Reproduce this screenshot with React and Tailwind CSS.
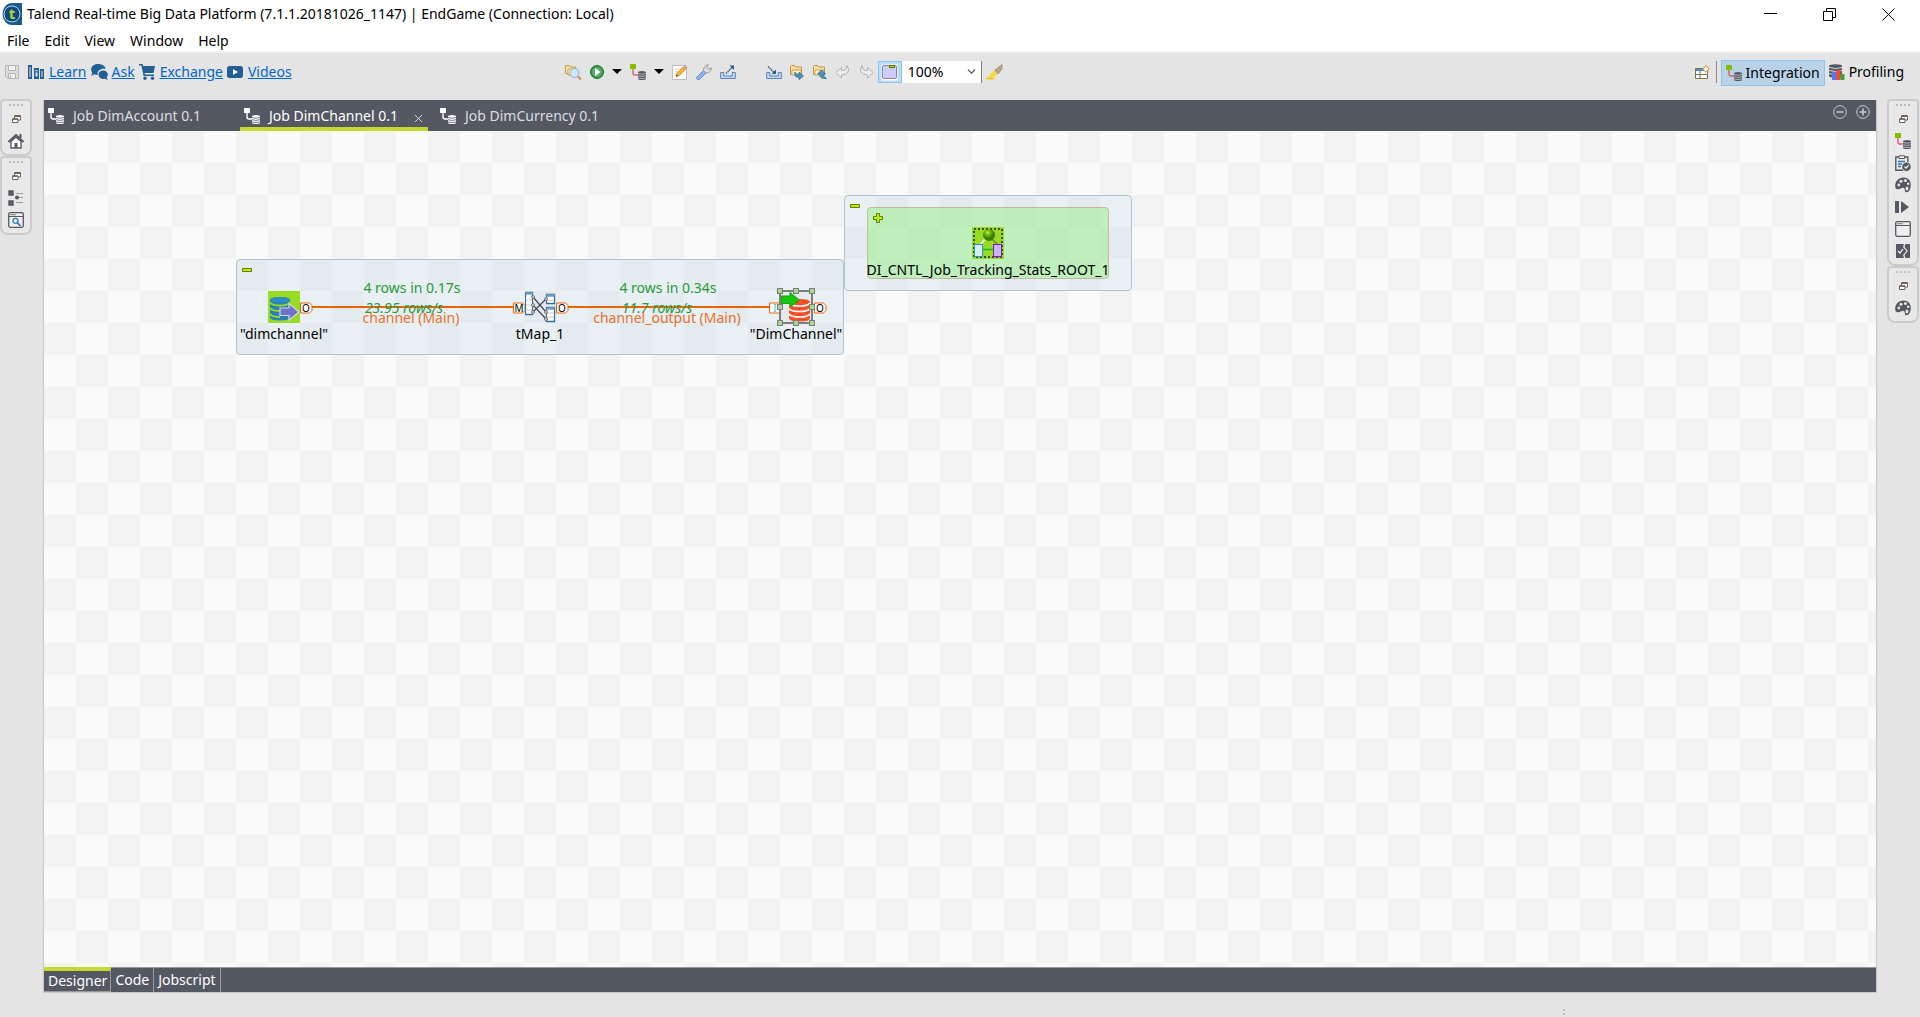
import React from 'react';
import { ChevronDown } from 'lucide-react';

const svg = (w, h = w) => ({ width: w, height: h, viewBox: `0 0 ${w} ${h}`, 'aria-hidden': true });

const TalendLogo = () => (
  <svg {...svg(20, 24)}>
    <path d="M11 1h9v22H10z" fill="#1b5a8e" />
    <ellipse cx="10" cy="12" rx="9.5" ry="11" fill="#1b5a8e" />
    <circle cx="10" cy="12" r="8" fill="#0f4a7c" stroke="#b9d3e6" strokeWidth="1" />
    <text x="10" y="17" textAnchor="middle" fontSize="15" fontWeight="700" fontFamily="Noto Sans, sans-serif" fill="#b5d334">t</text>
  </svg>
);

const JobIcon = ({ head = '#84bd00', line = '#e0606a', db = '#545863' }) => (
  <svg {...svg(16)}>
    <rect x="0" y="0" width="6" height="5" rx="0.5" fill={head} />
    <path d="M3 5v4q0 2 2 2h3" fill="none" stroke={line} strokeWidth="1.4" />
    <path d="M8 8.5q0-1.500 4-1.500t4 1.500v6q0 1.500-4 1.500t-4-1.500z" fill={db} />
    <path d="M8 9.500q4 1.500 8 0M8 11.700q4 1.500 8 0M8 13.900q4 1.500 8 0" fill="none" stroke={head === '#fff' ? '#545863' : '#c9cbd0'} strokeWidth="0.8" />
  </svg>
);
const WhiteJob = () => <JobIcon head="#fff" line="#fff" db="#fff" />;

const Save = () => (
  <svg {...svg(16)} fill="none" stroke="#b4b4b4">
    <path d="M1.500 1.500h13v13h-11l-2-2z" fill="#dcdcdc" />
    <path d="M4.500 1.500h7v5h-7zM4.500 14v-4.500h7v4.500M6.500 11v3" fill="#efefef" />
  </svg>
);
const Learn = () => (
  <svg {...svg(17, 16)} fill="#245f94">
    <path d="M0 1h4v14H0zM6 4h5v11H6zM12 5h4v10h-4z" />
    <path d="M1.500 3h1v10h-1zM7.500 6h2v1.200h-2zM7.500 8.500h2v4h-2zM13.500 7h1v6h-1z" fill="#e4e4e4" />
  </svg>
);
const Ask = () => (
  <svg {...svg(17, 16)} fill="#245f94">
    <path d="M7 0c5 0 7.500 2.500 7.500 5-5-1-8.500 2-8 6-1.500 0-2-.2-3-.7L0 12l1.300-3C-1.500 5 1 0 7 0z" />
    <path d="M12 6.500c3 0 4.800 1.700 4.800 4 0 1.200-.4 2-1.100 2.800l1.100 2.700-3-1.200c-3.500.7-6.300-1.300-6.300-4.100 0-2.500 1.900-4.200 4.500-4.200z" />
  </svg>
);
const Cart = () => (
  <svg {...svg(17, 16)} fill="#245f94">
    <path d="M0 0h3.500l.8 2H16l-1.500 7H5.600l.4 1.500h9V12H4.600L2.400 1.600H0z" />
    <circle cx="6" cy="14.200" r="1.700" /><circle cx="13.500" cy="14.200" r="1.700" />
  </svg>
);
const Video = () => (
  <svg {...svg(17, 16)}><rect x="0" y="2" width="16" height="12" rx="2.500" fill="#245f94" /><path d="M6 5l5 3-5 3z" fill="#fff" /></svg>
);
const SearchFolder = () => (
  <svg {...svg(17, 16)}>
    <path d="M.5 9.500v-8h4l1 1.500h5v6.500z" fill="#fbe3a4" stroke="#c99b4b" />
    <path d="M3 5h9v6H3z" fill="#fff1c9" stroke="#c99b4b" />
    <circle cx="9.500" cy="9" r="4.500" fill="#cfe5fb" stroke="#8bb0dc" />
    <path d="M13 12.500l3 3" stroke="#d08a54" strokeWidth="2" />
  </svg>
);
const Run = () => (
  <svg {...svg(14)}><circle cx="7" cy="7" r="6.500" fill="#35934a" stroke="#1f7436" /><circle cx="7" cy="7" r="4.800" fill="#5fb06e" /><path d="M5 3l5.500 4L5 11z" fill="#fff" /></svg>
);
const Caret = () => <svg {...svg(10, 6)}><path d="M0 0h10L5 5z" fill="#000" /></svg>;
const EditIcon = () => (
  <svg {...svg(16)}>
    <path d="M.5 1.500h14v14H.5z" fill="#fff" stroke="#bdbdbd" />
    <path d="M3 5h5M3 7.500h3M3 10h2" stroke="#d8d8d8" />
    <path d="M4 12.500l1-3.500 6-6 2.500 2.300-6.200 6.200z" fill="#f7b733" stroke="#d4872a" strokeWidth=".8" />
    <path d="M11 3l1.500-1.600 2.600 2.300-1.600 1.600z" fill="#e98b7c" />
    <path d="M4 12.500l.5-2 1.500 1.300z" fill="#333" />
  </svg>
);
const Wrench = () => (
  <svg {...svg(16)}>
    <path d="M1 13L7.500 6.500l2.500 2.500-6.500 6.500q-1.500.5-2.500-.5t0-2z" fill="#8fb4ee" stroke="#5f8bd0" />
    <path d="M7.500 6.500Q7.500 1.500 12.500.7L10.700 3.500l1.800 1.800L15.500 4Q15 8.800 10 9z" fill="#dcdcdc" stroke="#9a9a9a" />
  </svg>
);
const Export = () => (
  <svg {...svg(16)} fill="none"><path d="M.7 8.500h3v3.500h8.600v-3.500h3v6H.7z" fill="#c7d9f0" stroke="#5b82b8" /><path d="M6 9.500L13 2.500" stroke="#235a8c" strokeDasharray="1.500 .7" strokeWidth="1.400" /><path d="M9.500 1.500H14V6z" fill="#235a8c" /></svg>
);
const Import = () => (
  <svg {...svg(16)} fill="none"><path d="M.7 8.500h3v3.500h8.600v-3.500h3v6H.7z" fill="#c7d9f0" stroke="#5b82b8" /><path d="M2 2.500l6 6" stroke="#235a8c" strokeDasharray="1.500 .7" strokeWidth="1.400" /><path d="M10 5.500V10H5.500z" fill="#235a8c" /></svg>
);
const FolderArrow = ({ up }) => (
  <svg {...svg(16)}>
    <path d="M1.500 10.500v-8l1-1h3l1 1.500h6v7.500z" fill="#fbe3a4" stroke="#c1903f" />
    <path d="M3 6h9v5H3z" fill="#fff1c9" stroke="#c1903f" strokeWidth=".8" />
    {up
      ? <path d="M9.500 6l4 4h-2q0 3 3 4.500-7 .5-7-4.500h-2z" fill="#4d93b8" stroke="#2b6c94" strokeWidth=".8" />
      : <path d="M6 8q0 2.500 4 2.500V8.200L14.500 12 10 15.500v-2.300Q4.500 13.500 6 8z" fill="#4d93b8" stroke="#2b6c94" strokeWidth=".8" />}
  </svg>
);
const Undo = () => <svg {...svg(16)}><path d="M.8 8.500L6.500 3.500v3Q12 7 12 1.500q5 8-5.500 9.500v3z" fill="#ececec" stroke="#b2b2b2" /></svg>;
const Redo = () => <svg {...svg(16)}><path d="M15.200 8.500L9.500 3.500v3Q4 7 4 1.500q-5 8 5.500 9.500v3z" fill="#ececec" stroke="#b2b2b2" /></svg>;
const SubjobIcon = () => (
  <svg {...svg(17)}><rect x=".5" y=".5" width="16" height="16" fill="#fff" /><rect x="1.500" y="1.500" width="14" height="13" rx="1.500" fill="#ccccff" stroke="#8a8a96" /><rect x="8.500" y="1.500" width="5" height="2" fill="#b5e000" stroke="#5c7a00" /></svg>
);
const Brush = () => (
  <svg {...svg(17, 16)}><path d="M4 10l5.500-4.500 2.500 3-3 4.500-7 1z" fill="#f6d848" /><path d="M9 6L16 .5V5l-4 5z" fill="#b8a98c" stroke="#8c7f68" strokeWidth=".7" /><path d="M0 14.500h8" stroke="#f2c500" strokeWidth="1.600" /></svg>
);
const Perspective = () => (
  <svg {...svg(15)} fill="none"><path d="M.5 3.500h12v10H.5z" fill="#f4faff" stroke="#827349" /><path d="M1 5h9" stroke="#4d8dc8" strokeWidth="2" /><path d="M5 6v8M1 9.500h11" stroke="#827349" /><path d="M11 .7L14.300 4 11 7.300 7.700 4z" fill="#fff4cf" stroke="#bd8f34" /></svg>
);
const Profile = () => (
  <svg {...svg(16)}><path d="M0 2q0-1.800 6.500-1.800T13 2v10q0 1.500-6.500 1.500T0 12z" fill="#545863" /><path d="M0 3.500q6.500 2 13 0M0 6.500q6.500 2 13 0M0 9.500q3 1 5 1" fill="none" stroke="#d9dade" /><path d="M3 8h4v8H3z" fill="#4d7df0" /><path d="M7 6h4.500v10H7z" fill="#f4473c" /><path d="M11.500 10h4v6h-4z" fill="#35a835" /></svg>
);
const Restore = () => (
  <svg {...svg(9, 8)} fill="#fff" stroke="#6f6257"><path d="M2.500 1h6v4h-6z" /><path d="M2.500 1h6" strokeWidth="2" /><path d="M.5 4h5.500v3.500H.5z" /><path d="M.5 4H6" strokeWidth="1.500" /></svg>
);
const Home = () => (
  <svg {...svg(16)}><path d="M3 8.500V15h10V8.500L8 4z" fill="#fff" stroke="#545863" strokeWidth="1.400" /><path d="M.5 9L8 2l7.500 7" fill="none" stroke="#545863" strokeWidth="2" /><path d="M11.500 1h2v4h-2zM6.500 10h3v5h-3z" fill="#545863" /></svg>
);
const Outline = () => (
  <svg {...svg(16)}><path d="M1.500 1.500h3v3h-3zM1.500 11.500h3v3h-3z" fill="#fff" stroke="#545863" strokeWidth="2.400" /><path d="M8 3.500h7M11 7.500h4M8 12.500h7" stroke="#9b9da3" /><circle cx="9" cy="7.500" r="2" fill="#545863" /></svg>
);
const WindowIcon = ({ search }) => (
  <svg {...svg(16)} fill="none">
    <rect x=".7" y=".7" width="14.600" height="14.600" rx="1.500" fill="#ededed" stroke="#545863" strokeWidth="1.300" />
    <path d="M1 4.500h14" stroke="#545863" /><path d="M2.500 2.600h5" stroke="#545863" strokeDasharray="1.200 .8" strokeWidth="1.200" />
    {search && <><circle cx="7.500" cy="8.800" r="2.500" stroke="#2d7cb8" strokeWidth="1.300" /><path d="M9.500 10.800l3 3" stroke="#2d7cb8" strokeWidth="1.700" /></>}
  </svg>
);
const Clipboard = () => (
  <svg {...svg(16)} fill="none"><path d="M8 15.300H.8V2h12v5" stroke="#545863" strokeWidth="1.400" /><path d="M4 .8h5.500v2.700H4z" fill="#fff" stroke="#545863" /><path d="M3 6.500h7M3 9h4M3 11.500h3" stroke="#2d7cb8" strokeWidth="1.300" /><circle cx="11.500" cy="11.700" r="4.300" fill="#545863" /><path d="M9.500 11.700l1.500 1.500 2.700-3" stroke="#fff" strokeWidth="1.200" /></svg>
);
const Palette = () => (
  <svg {...svg(16)}><path d="M8.500.5c4.500 0 7.300 3 7.300 7.300 0 4.500-1.800 7.500-4.300 7.500-2.200 0-1.200-2-2-3.500-1-2-3-.3-5 .2C1.500 13 .2 11.700.2 9 .2 4 3.800.5 8.500.5z" fill="#545863" /><g fill="#e4e4e4"><circle cx="3.800" cy="8" r="1.400" /><circle cx="6" cy="4.300" r="1.500" /><circle cx="10.400" cy="3.600" r="1.500" /><circle cx="13.200" cy="6.800" r="1.300" /><ellipse cx="12" cy="11.500" rx="1.400" ry="2" /></g></svg>
);
const RunView = () => <svg {...svg(16, 12)} fill="#545863"><path d="M0 0h4v12H0zM6 0l8 6-8 6z" /></svg>;
const TestView = () => (
  <svg {...svg(16)}><path d="M1 1h8l-1 3 3.500 4L8 12l1 3H1z" fill="#545863" /><path d="M10.500 1H15v14h-4.500l-1-3L13 8 9.500 4z" fill="#545863" /><path d="M3 8l2 2 3-4" fill="none" stroke="#fff" strokeWidth="1.200" /></svg>
);

const InputDb = () => (
  <svg {...svg(32)}>
    <rect width="32" height="32" fill="#98db22" />
    <path d="M2 9q0-3 10-3t10 3v17q0 3.500-10 3.500T2 26z" fill="#2781b6" />
    <ellipse cx="12" cy="9" rx="10" ry="2.800" fill="#2f8cc2" />
    <path d="M2 11.500q2 3 10 3t10-3M2 17q2 3 10 3M2 23q2 3 10 3" fill="none" stroke="#98db22" strokeWidth="2" />
    <path d="M12 17h9v-4.500l10 8.500-10 8v-4.500h-9z" fill="#6b75c4" stroke="#d9d4ee" strokeWidth="1.200" />
  </svg>
);
const MapIcon = () => (
  <svg {...svg(32, 36)} fill="#fff" stroke="#3d6f9c">
    <path d="M.5 2.500h7v22h-7zM21.500 4.500h8v9h-8zM21.500 17.500h8v14h-8z" strokeWidth="1.300" />
    <path d="M.5 3.500h7M21.500 5.500h8M21.500 18.500h8" stroke="#6f9cc6" strokeWidth="2.500" />
    <path d="M1.500 10h5M1.500 15h5M1.500 20h5M22.500 10.500h6M22.500 23h6M22.500 27h6" stroke="#c6c9ce" />
    <path d="M8 7l13 15M8 15l13 14M8 22L21 9" fill="none" stroke="#454850" strokeWidth="1.200" />
    <g fill="#ccc" stroke="#666" strokeWidth=".8"><circle cx="8" cy="7" r="1.500" /><circle cx="8" cy="15" r="1.500" /><circle cx="8" cy="22" r="1.500" /><circle cx="21" cy="9" r="1.500" /><circle cx="21" cy="22" r="1.500" /><circle cx="21" cy="29" r="1.500" /></g>
  </svg>
);
const OutputDb = () => (
  <svg {...svg(38)}>
    <path d="M12 14q0-3 10.500-3T33 14v16q0 3.500-10.500 3.500T12 30z" fill="#fb4f2a" />
    <path d="M12 15q2 3 10.500 3T33 15M12 20.500q2 3 10.500 3t10.500-3M12 26q2 3 10.500 3T33 26" fill="none" stroke="#fff" strokeWidth="1.500" />
    <path d="M4 8h9V4.500l9.500 7.500-9.500 7v-3.500H4z" fill="#16c60c" stroke="#11a50a" />
    <path d="M3 3h32v32H3z" fill="none" stroke="#7d7d7d" strokeWidth="2" />
    <g fill="#a8d890" stroke="#7d7d7d">
      {[.5, 16.5, 32.5].flatMap((x) => [.5, 16.5, 32.5].filter((y) => x !== 16.5 || y !== 16.5).map((y) => <rect key={`${x}-${y}`} x={x} y={y} width="5" height="5" />))}
    </g>
  </svg>
);
const JobletIcon = () => (
  <svg {...svg(32)}>
    <defs><radialGradient id="ball" cx=".4" cy=".3"><stop offset="0" stopColor="#b6f04a" /><stop offset=".6" stopColor="#55a800" /><stop offset="1" stopColor="#3c7d00" /></radialGradient></defs>
    <rect width="32" height="32" fill="#98db22" />
    <rect x="2" y="2" width="28" height="28" fill="none" stroke="#3c4a1c" strokeWidth="2" strokeDasharray="2 2" />
    <path d="M14 11l-6 7" stroke="#e8f4d0" strokeWidth="2" /><path d="M19 11l7 7" stroke="#6b8a3a" strokeWidth="1.500" />
    <path d="M11 22.500h10" stroke="#00c818" strokeWidth="1.500" />
    <circle cx="17" cy="8" r="6" fill="url(#ball)" />
    <rect x="2.500" y="17.500" width="8" height="12" fill="#d9ecf8" stroke="#1f95d8" />
    <rect x="21.500" y="17.500" width="8" height="12" fill="#c5b8f2" stroke="#8a13d8" />
  </svg>
);
const Minus = () => <svg {...svg(10, 4)}><path d="M.5.5h9v3h-9z" fill="#b9f000" stroke="#667c00" /></svg>;
const Plus = () => <svg {...svg(10)}><path d="M3.500.5h3v3h3v3h-3v3h-3v-3h-3v-3h3z" fill="#b9f000" stroke="#667c00" /></svg>;

const Port = ({ name, square }) => (
  <svg {...svg(13, 12)}>
    <path d={square ? 'M.5 1h10v10H.5z' : 'M.5 1h9l2.500 2.500v5L9.500 11H.5z'} fill="#fff" stroke="#e96400" />
    <text x="6" y="10" textAnchor="middle" fontSize="10" fontFamily="Noto Sans, sans-serif" fill={square ? '#5aaee8' : '#000'}>{name}</text>
  </svg>
);

const IconButton = ({ label, className = '', children }) => (
  <button type="button" aria-label={label} className={`flex shrink-0 items-center justify-center ${className}`}>{children}</button>
);

const HelpLink = ({ icon, children }) => (
  <a href="#" className="flex items-center gap-1 text-[#0066cc]">{icon}<span className="underline">{children}</span></a>
);

const Rail = ({ label, items }) => (
  <div role="toolbar" aria-label={label} className="flex w-8 flex-col items-center rounded-b-lg rounded-t-sm border-2 border-[#cbcbcb] bg-[#e8e8e8] pt-[3px] pb-0.5">
    <div className="mb-0.5 flex gap-0.5">
      {[0, 1, 2, 3].map((i) => <span key={i} className="size-0.5 bg-[#bdbdbd]" />)}
    </div>
    {[['Restore', <Restore />], ...items].map(([name, icon]) => (
      <IconButton key={name} label={name} className="h-[22px] w-6">{icon}</IconButton>
    ))}
  </div>
);

const Tab = ({ title, active }) => (
  <div className={`flex w-[188px] items-center border-b-4 px-1 pt-1 ${active ? 'border-[#c4d82e] text-white' : 'border-transparent text-[#dcdde0]'}`}>
    <button type="button" role="tab" aria-selected={!!active} className="flex h-full items-center gap-[9px] whitespace-nowrap"><WhiteJob />{title}</button>
    {active && (
      <IconButton label="Close tab" className="mt-1.5 ml-auto w-3">
        <svg {...svg(9)}><path d="M1 1l7 7M8 1L1 8" stroke="#d4d5d8" /></svg>
      </IconButton>
    )}
  </div>
);

const Label = ({ at, className = 'text-black', children }) => (
  <div className={`absolute -translate-x-1/2 whitespace-nowrap ${at} ${className}`}>{children}</div>
);

export default function App() {
  return (
    <div className="flex h-screen flex-col bg-[#e4e4e4] font-['Noto_Sans',sans-serif] text-sm leading-5 text-black">
      <header className="border-b-2 border-[#f2f2f2] bg-white">
        <div className="flex h-7 items-center pl-0.5">
          <TalendLogo />
          <h1 className="ml-[5px]">Talend Real-time Big Data Platform (7.1.1.20181026_1147) | EndGame (Connection: Local)</h1>
          <div className="ml-auto flex gap-[46px] pr-[25px]">
            <IconButton label="Minimize"><svg {...svg(13)}><path d="M0 5.500h13" stroke="#000" /></svg></IconButton>
            <IconButton label="Restore window"><svg {...svg(13)} fill="none" stroke="#000"><path d="M.5 3.500h9v9h-9zM3.500 3V.5h9v9H10" /></svg></IconButton>
            <IconButton label="Close"><svg {...svg(13)}><path d="M.5.5l12 12M12.500.5l-12 12" stroke="#000" /></svg></IconButton>
          </div>
        </div>
        <nav className="flex h-[23px] items-start gap-[15px] pt-[3px] pl-[7px]">
          {['File', 'Edit', 'View', 'Window', 'Help'].map((m) => <button key={m} type="button">{m}</button>)}
        </nav>
      </header>

      <div className="flex h-[46px] shrink-0 items-center pb-2 pl-1 whitespace-nowrap">
        <div className="flex items-center gap-1">
          <IconButton label="Save" className="mr-1"><Save /></IconButton>
          <HelpLink icon={<Learn />}>Learn</HelpLink>
          <HelpLink icon={<Ask />}>Ask</HelpLink>
          <HelpLink icon={<Cart />}>Exchange</HelpLink>
          <HelpLink icon={<Video />}>Videos</HelpLink>
        </div>
        <div className="ml-[273px] flex items-center gap-2">
          <IconButton label="Find"><SearchFolder /></IconButton>
          <IconButton label="Run"><Run /></IconButton>
          <IconButton label="Run options"><Caret /></IconButton>
          <IconButton label="Create job"><JobIcon /></IconButton>
          <IconButton label="Create options"><Caret /></IconButton>
          <IconButton label="Edit"><EditIcon /></IconButton>
          <IconButton label="Settings"><Wrench /></IconButton>
          <IconButton label="Export"><Export /></IconButton>
        </div>
        <div className="ml-[30px] flex items-center gap-[7px]">
          <IconButton label="Import"><Import /></IconButton>
          <IconButton label="Import items"><FolderArrow /></IconButton>
          <IconButton label="Export items"><FolderArrow up /></IconButton>
          <IconButton label="Undo"><Undo /></IconButton>
          <IconButton label="Redo"><Redo /></IconButton>
        </div>
        <div className="ml-1 flex items-center">
          <IconButton label="Show subjobs" className="h-[22px] w-6 border border-[#8cc3f0] bg-[#bcdcf4]"><SubjobIcon /></IconButton>
          <div className="relative">
            <select aria-label="Zoom" defaultValue="100%" className="block h-[22px] w-20 appearance-none border-r border-[#7a7a7a] bg-white pl-1.5 leading-5">
              <option>100%</option>
            </select>
            <ChevronDown size={13} strokeWidth={2} className="pointer-events-none absolute top-1 right-1 text-[#444]" />
          </div>
          <IconButton label="Clean" className="ml-1"><Brush /></IconButton>
        </div>
        <div className="ml-auto flex items-center pr-4">
          <IconButton label="Open perspective"><Perspective /></IconButton>
          <span className="mr-1 ml-1.5 h-[22px] w-px bg-[#8a8a8a]" />
          <button type="button" aria-pressed="true" className="mt-0.5 flex h-[26px] items-center gap-1 border border-[#8cc3f0] bg-[#b8d3e8] px-1"><JobIcon />Integration</button>
          <button type="button" className="ml-[3px] flex items-center gap-1 pl-px"><Profile />Profiling</button>
        </div>
      </div>

      <div className="flex min-h-0 flex-1">
        <aside className="w-[43px] shrink-0">
          <Rail label="Left views" items={[['Home', <Home />]]} />
          <Rail label="Outline views" items={[['Outline', <Outline />], ['Code viewer', <WindowIcon search />]]} />
        </aside>

        <main className="mt-px flex min-w-0 flex-1 flex-col border border-t-0 border-[#c8c8c8]">
          <div role="tablist" className="flex h-[31px] shrink-0 gap-2 bg-[#545863]">
            <Tab title="Job DimAccount 0.1" />
            <Tab title="Job DimChannel 0.1" active />
            <Tab title="Job DimCurrency 0.1" />
            <div className="mt-1 ml-auto flex h-4 gap-[9px] pr-1.5">
              <IconButton label="Minimize editor"><svg {...svg(14)} fill="none" stroke="#c9cbd0"><circle cx="7" cy="7" r="6.300" /><path d="M3.500 7h7" strokeWidth="1.500" /></svg></IconButton>
              <IconButton label="Maximize editor"><svg {...svg(14)} fill="none" stroke="#c9cbd0"><circle cx="7" cy="7" r="6.300" /><path d="M3.500 7h7M7 3.500v7" strokeWidth="1.500" /></svg></IconButton>
            </div>
          </div>

          <div className="relative min-h-0 flex-1 overflow-hidden bg-[conic-gradient(#fafafa_25%,#f3f3f3_0_50%,#fafafa_0_75%,#f3f3f3_0)] bg-[length:64px_64px]">
            <section aria-label="dimchannel subjob" className="absolute top-[128px] left-[192px] h-24 w-[608px] rounded border border-[#afc5cf] bg-[rgba(193,220,233,0.3)]" />
            <div className="absolute top-[137px] left-[198px]"><Minus /></div>

            <div className="absolute top-[175px] left-[267px] h-0.5 w-[204px] bg-[#e96400]" />
            <div className="absolute top-[175px] left-[523px] h-0.5 w-[204px] bg-[#e96400]" />
            <Label at="top-[147px] left-[368px]" className="text-[#2a9a3a]">4 rows in 0.17s</Label>
            <Label at="top-[167px] left-[360px]" className="text-[#2a9a3a] italic">23.95 rows/s</Label>
            <Label at="top-[177px] left-[367px]" className="text-[#e8702a]">channel (Main)</Label>
            <Label at="top-[147px] left-[624px]" className="text-[#2a9a3a]">4 rows in 0.34s</Label>
            <Label at="top-[167px] left-[613px]" className="text-[#2a9a3a] italic">11.7 rows/s</Label>
            <Label at="top-[177px] left-[623px]" className="text-[#e8702a]">channel_output (Main)</Label>

            <div className="absolute top-[160px] left-[224px]"><InputDb /></div>
            <div className="absolute top-[171px] left-[256px]"><Port name="O" /></div>
            <Label at="top-[193px] left-[240px]">"dimchannel"</Label>
            <div className="absolute top-[171px] left-[469px]"><Port name="M" /></div>
            <div className="absolute top-[159px] left-[481px]"><MapIcon /></div>
            <div className="absolute top-[171px] left-[512px]"><Port name="O" /></div>
            <Label at="top-[193px] left-[496px]">tMap_1</Label>
            <div className="absolute top-[171px] left-[725px]"><Port name="I" square /></div>
            <div className="absolute top-[171px] left-[770px]"><Port name="O" /></div>
            <div className="absolute top-[157px] left-[733px]"><OutputDb /></div>
            <Label at="top-[193px] left-[752px]">"DimChannel"</Label>

            <section aria-label="Tracking subjob" className="absolute top-[64px] left-[800px] h-24 w-[288px] rounded border border-[#afc5cf] bg-[rgba(193,220,233,0.3)]" />
            <div className="absolute top-[73px] left-[806px]"><Minus /></div>
            <section aria-label="Joblet" className="absolute top-[76px] left-[823px] h-[72px] w-[242px] rounded border border-[#c3b89a] bg-[rgba(173,238,165,0.7)]" />
            <div className="absolute top-[82px] left-[829px]"><Plus /></div>
            <div className="absolute top-[96px] left-[928px]"><JobletIcon /></div>
            <Label at="top-[129px] left-[944px]">DI_CNTL_Job_Tracking_Stats_ROOT_1</Label>
          </div>

          <div role="tablist" className="flex h-[25px] shrink-0 border-t border-[#999] bg-[#545863] text-white">
            <button type="button" role="tab" aria-selected="true" className="-mt-px border-t-4 border-r border-b border-[#999] border-t-[#c4d82e] px-[3px] pl-1 leading-4">Designer</button>
            <button type="button" role="tab" aria-selected="false" className="border-r border-[#999] px-1">Code</button>
            <button type="button" role="tab" aria-selected="false" className="border-r border-[#999] px-1">Jobscript</button>
          </div>
        </main>

        <aside className="flex w-[43px] shrink-0 flex-col items-end pr-px">
          <Rail label="Right views" items={[['Job', <JobIcon />], ['Contexts', <Clipboard />], ['Component', <Palette />], ['Run job', <RunView />], ['Problems', <WindowIcon />], ['Test cases', <TestView />]]} />
          <Rail label="Palette views" items={[['Palette', <Palette />]]} />
        </aside>
      </div>

      <footer className="flex h-6 shrink-0 flex-col items-end gap-0.5 pt-4 pr-[355px]">
        <span className="size-0.5 bg-[#bdbdbd]" />
        <span className="size-0.5 bg-[#bdbdbd]" />
      </footer>
    </div>
  );
}
